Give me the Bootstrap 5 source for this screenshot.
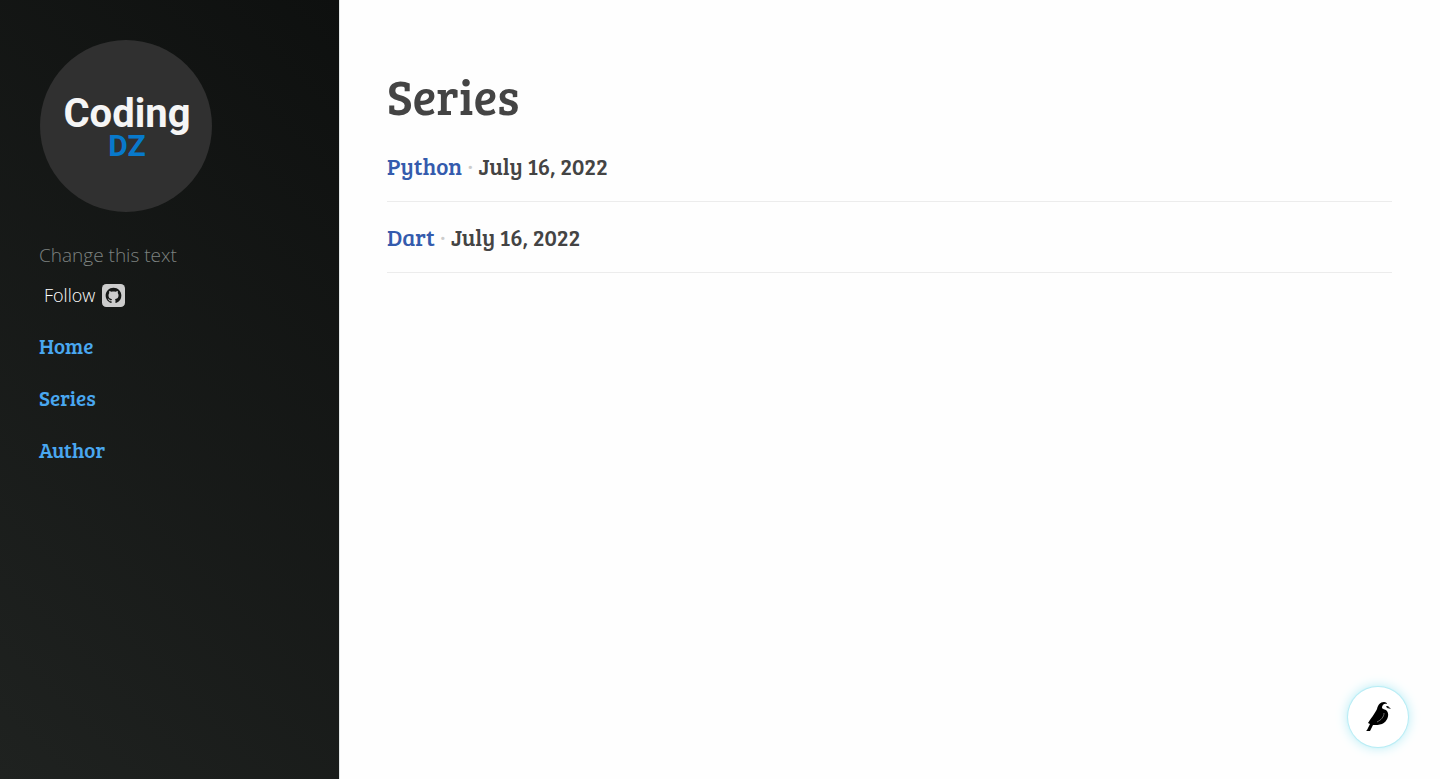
<!DOCTYPE html>
<html lang="en">
<head>
<meta charset="utf-8">
<meta name="viewport" content="width=device-width, initial-scale=1">
<title>Series</title>
<link href="https://cdn.jsdelivr.net/npm/bootstrap@5.3.0/dist/css/bootstrap.min.css" rel="stylesheet">
<style>
body { font-family: "Open Sans", sans-serif; color: #444; background: #fefefe; }
.slab { font-family: "Bree Serif", "DejaVu Serif Condensed", "DejaVu Serif", serif; }
.side { background: linear-gradient(45deg, #1f2220, #0e100f); padding: 40px 39px; box-shadow: 1px 0 #e4e8e8; }
.logo { width: 172px; height: 172px; margin-left: 1px; }
.logo text { font-family: Roboto, sans-serif; font-weight: 700; }
.tagline { font-size: 19px; line-height: 30px; font-weight: 300; color: #7d8280; margin-top: 22px; }
.follow { font-size: 18px; line-height: 24px; font-weight: 300; color: #fff; margin: 13px 0 0 5px; gap: 7px; }
.menu { margin-top: 24px; gap: 22px; }
.menu a { font-size: 21px; line-height: 30px; color: #49a7f0; }
.main-area { padding: 64px 48px; }
.title { font-size: 49px; line-height: 64px; color: #444; }
.entry { font-size: 23px; line-height: 30px; padding: 20px 0; border-bottom: 1px solid #ececec; margin: 0; }
.entry:first-child { padding-top: 23px; }
.entry a { color: #345bad; }
.dot { color: #ccc; }
.bird { width: 60px; height: 60px; right: 32px; bottom: 32px; background: #fff; box-shadow: 0 0 1px 1px #b4ebf4, 0 0 12px 1px #b9eef7; }
@media (min-width: 768px) { .side { width: 339px; } }
</style>
</head>
<body>
<div class="d-flex flex-column flex-md-row min-vh-100">
  <aside class="side flex-shrink-0">
    <a href="#" class="d-inline-block" aria-label="Coding DZ home">
      <svg class="logo d-block" viewBox="0 0 172 172">
        <circle cx="86" cy="86" r="86" fill="#303030"/>
        <text x="87" y="87" font-size="40" text-anchor="middle" fill="#f5f5f5">Coding</text>
        <text x="87" y="116" font-size="30" text-anchor="middle" fill="#0879cb">DZ</text>
      </svg>
    </a>
    <p class="tagline mb-0">Change this text</p>
    <div class="follow d-flex align-items-center">
      <span>Follow</span>
      <a href="#" class="d-block lh-1" aria-label="GitHub">
        <svg class="d-block" width="23" height="23" viewBox="0 0 24 24">
          <rect width="24" height="24" rx="4.5" fill="#ccc"/>
          <path transform="translate(3.8 3.9) scale(1.025)" fill="#151716" d="M8 0C3.58 0 0 3.58 0 8c0 3.54 2.29 6.53 5.47 7.59.4.07.55-.17.55-.38 0-.19-.01-.82-.01-1.49-2.01.37-2.53-.49-2.69-.94-.09-.23-.48-.94-.82-1.13-.28-.15-.68-.52-.01-.53.63-.01 1.08.58 1.23.82.72 1.21 1.87.87 2.33.66.07-.52.28-.87.51-1.07-1.78-.2-3.64-.89-3.64-3.95 0-.87.31-1.59.82-2.15-.08-.2-.36-1.02.08-2.12 0 0 .67-.21 2.2.82.64-.18 1.32-.27 2-.27s1.36.09 2 .27c1.53-1.04 2.2-.82 2.2-.82.44 1.1.16 1.92.08 2.12.51.56.82 1.27.82 2.15 0 3.07-1.87 3.75-3.65 3.95.29.25.54.73.54 1.48 0 1.07-.01 1.93-.01 2.2 0 .21.15.46.55.38A8.01 8.01 0 0 0 16 8c0-4.42-3.58-8-8-8z"/>
        </svg>
      </a>
    </div>
    <nav class="menu slab d-flex flex-column align-items-start">
      <a href="#" class="text-decoration-none">Home</a>
      <a href="#" class="text-decoration-none">Series</a>
      <a href="#" class="text-decoration-none">Author</a>
    </nav>
  </aside>
  <main class="main-area flex-grow-1">
    <h1 class="title slab fw-normal mb-0">Series</h1>
    <div>
      <h2 class="entry slab fw-normal"><a href="#" class="text-decoration-none">Python</a> <span class="dot">·</span> July 16, 2022</h2>
      <h2 class="entry slab fw-normal"><a href="#" class="text-decoration-none">Dart</a> <span class="dot">·</span> July 16, 2022</h2>
    </div>
  </main>
</div>
<button type="button" class="bird position-fixed border-0 rounded-circle p-0 d-flex align-items-center justify-content-center" aria-label="Wagtail menu">
  <svg width="28" height="32" viewBox="0 0 28 32">
    <path d="M4 22C6 19 11 12 13 8 14 4 16 1 20 1c2 0 3 1 3 2-3-1-5 1-5 4 0 1 3 1 5 3 3 4 0 11-5 13-3 1-6 1-9 1L6 30H3c-1 0-1-1 0-1l3-6z"/>
    <path d="M20 12c0 4-3 7-7 9" fill="none" stroke="#999" stroke-width=".7"/>
    <path d="M22 5l2 0 3 3-4-1z" fill="#222"/>
  </svg>
</button>
<script src="https://cdn.jsdelivr.net/npm/bootstrap@5.3.0/dist/js/bootstrap.bundle.min.js"></script>
</body>
</html>
